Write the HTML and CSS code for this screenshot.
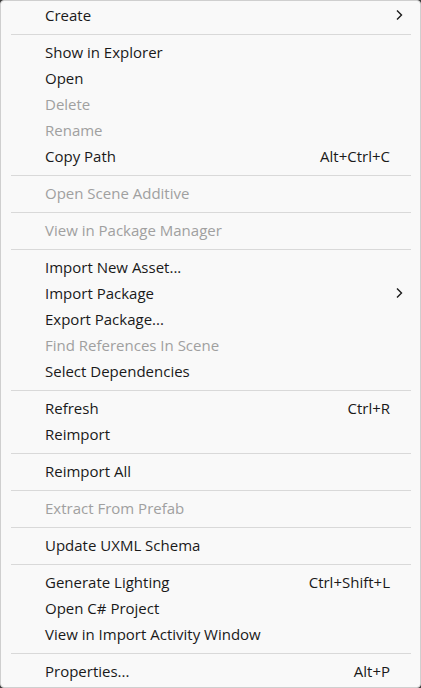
FILE: index.html
```html
<!DOCTYPE html>
<html lang="en">
<head>
<meta charset="utf-8">
<title>Context menu</title>
<link rel="stylesheet" href="styles.css">
</head>
<body>
<div class="menu">
  <div class="item"><span class="label">Create</span><svg class="arrow" viewBox="0 0 8 12" width="8" height="12"><path d="M2 1.5 L6.5 6 L2 10.5" fill="none" stroke="#1b1b1b" stroke-width="1.4"/></svg></div>
  <div class="sep"></div>
  <div class="item"><span class="label">Show in Explorer</span></div>
  <div class="item"><span class="label">Open</span></div>
  <div class="item disabled"><span class="label">Delete</span></div>
  <div class="item disabled"><span class="label">Rename</span></div>
  <div class="item"><span class="label">Copy Path</span><span class="key">Alt+Ctrl+C</span></div>
  <div class="sep"></div>
  <div class="item disabled"><span class="label">Open Scene Additive</span></div>
  <div class="sep"></div>
  <div class="item disabled"><span class="label">View in Package Manager</span></div>
  <div class="sep"></div>
  <div class="item"><span class="label">Import New Asset...</span></div>
  <div class="item"><span class="label">Import Package</span><svg class="arrow" viewBox="0 0 8 12" width="8" height="12"><path d="M2 1.5 L6.5 6 L2 10.5" fill="none" stroke="#1b1b1b" stroke-width="1.4"/></svg></div>
  <div class="item"><span class="label">Export Package...</span></div>
  <div class="item disabled"><span class="label">Find References In Scene</span></div>
  <div class="item"><span class="label">Select Dependencies</span></div>
  <div class="sep"></div>
  <div class="item"><span class="label">Refresh</span><span class="key">Ctrl+R</span></div>
  <div class="item"><span class="label">Reimport</span></div>
  <div class="sep"></div>
  <div class="item"><span class="label">Reimport All</span></div>
  <div class="sep"></div>
  <div class="item disabled"><span class="label">Extract From Prefab</span></div>
  <div class="sep"></div>
  <div class="item"><span class="label">Update UXML Schema</span></div>
  <div class="sep"></div>
  <div class="item"><span class="label">Generate Lighting</span><span class="key">Ctrl+Shift+L</span></div>
  <div class="item"><span class="label">Open C# Project</span></div>
  <div class="item"><span class="label">View in Import Activity Window</span></div>
  <div class="sep"></div>
  <div class="item"><span class="label">Properties...</span><span class="key">Alt+P</span></div>
</div>
</body>
</html>
```
FILE: styles.css
```css
html, body {
  margin: 0;
  padding: 0;
  background: #3a3a3a;
}
body {
  width: 421px;
  height: 688px;
  overflow: hidden;
}
.menu {
  box-sizing: border-box;
  width: 421px;
  height: 688px;
  background: #f9f9f9;
  border: 1px solid #cfcfcf;
  border-radius: 4px;
  padding: 1px 0 3px;
  font-family: "Open Sans", "Noto Sans", sans-serif;
  font-size: 15px;
  color: #1a1a1a;
  display: flex;
  flex-direction: column;
}
.item {
  height: 26px;
  display: flex;
  align-items: center;
  padding-left: 44px;
  padding-right: 30px;
  white-space: nowrap;
}
.item .label {
  flex: 1;
}
.item .key {
  color: #1a1a1a;
}
.item .arrow {
  margin-right: -13px;
}
.item.disabled {
  color: #a0a0a0;
}
.sep {
  height: 1px;
  margin: 6px 9px 4px 10px;
  background: #d9d9d9;
}
```
